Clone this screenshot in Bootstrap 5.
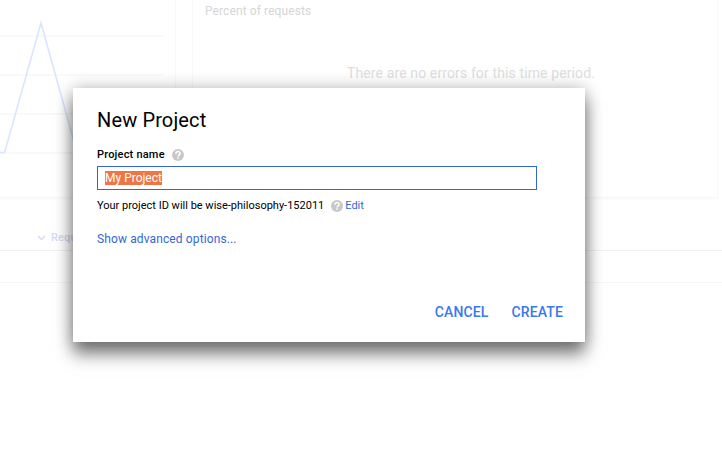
<!DOCTYPE html>
<html lang="en">
<head>
<meta charset="utf-8">
<meta name="viewport" content="width=device-width, initial-scale=1">
<title>New Project</title>
<link href="https://cdn.jsdelivr.net/npm/bootstrap@5.3.0/dist/css/bootstrap.min.css" rel="stylesheet">
<style>
body { font-family: Roboto, "Liberation Sans", sans-serif; background: #fff; width: 722px; height: 452px; overflow: hidden; color: #000; }
.panels { height: 198px; gap: 16px; }
.chart-panel { width: 176px; border: solid #f8f8f8; border-width: 0 1px 1px 0; box-shadow: 0 1px 1px #fafafa; }
.error-panel { width: 526px; border: solid #f8f8f8; border-width: 0 1px 1px 1px; box-shadow: 0 1px 1px #fafafa; padding: 3px 12px; }
.panel-label { font-size: 12px; line-height: 16px; color: #d6d6d6; letter-spacing: .1px; }
.empty-note { font-size: 14px; line-height: 20px; color: #dedede; margin-top: 44px; padding-left: 32px; letter-spacing: .12px; }
.requests-head { height: 53px; border-bottom: 1px solid #f1f1f1; padding: 28px 0 0 37px; gap: 5px; }
.requests-head span { font-size: 11px; line-height: 22px; font-weight: 500; color: #d3daf3; letter-spacing: .15px; }
.requests-row { height: 32px; border-bottom: 1px solid #f6f6f6; }
.dialog { left: 73px; top: 88px; width: 512px; height: 254px; padding: 18px 22px 18px 24px; background: #fff;
  box-shadow: 0 12px 16px rgba(0,0,0,.5), 0 0 16px rgba(0,0,0,.24); }
.dialog-title { font-size: 20px; line-height: 28px; font-weight: 400; letter-spacing: .13px; }
.name-label { font-size: 11px; line-height: 16px; font-weight: 500; margin-top: 13px; gap: 7px; letter-spacing: .2px; }
.name-field { width: 440px; height: 24px; margin-top: 3px; padding: 0 7px; border: 1px solid #3367d6; font-size: 12px; }
.selected-text { background: #ef7544; color: #fff; line-height: 14px; }
.id-note { font-size: 11px; line-height: 16px; margin-top: 8px; }
.id-note svg { margin-left: 7px; margin-right: 2px; }
.dialog a { color: #3367d6; }
.advanced { font-size: 12px; line-height: 16px; margin-top: 17px; letter-spacing: .12px; }
.actions { gap: 23px; }
.actions .btn { font-size: 14px; line-height: 24px; font-weight: 500; color: #3b78e7; letter-spacing: .12px; }
</style>
</head>
<body>
<svg class="d-none">
  <symbol id="help" viewBox="0 0 12 12"><circle cx="6" cy="6" r="6" fill="#c8c8c8"/><path d="M3.9 4.7C3.9 1.7 8.2 1.8 8.1 4.5C8.1 5.8 6.1 5.9 6.1 7.4" fill="none" stroke="#fff" stroke-width="1.5"/><path d="M5.3 8.3h1.5v1.5H5.3z" fill="#fff"/></symbol>
</svg>
<main>
  <div class="panels d-flex">
    <section class="chart-panel flex-shrink-0">
      <svg class="d-block" width="165" height="160" viewBox="0 0 165 160">
        <path d="M0 36h163M0 75h163M0 114h163M0 153h163" stroke="#f7f7f7" stroke-width="1.5"/>
        <path d="M0 152.5H4.6L41 23L77 152.5" fill="none" stroke="#d9e6fd" stroke-width="1.6"/>
      </svg>
    </section>
    <section class="error-panel flex-shrink-0">
      <div class="panel-label">Percent of requests</div>
      <div class="empty-note text-center">There are no errors for this time period.</div>
    </section>
  </div>
  <div class="requests-head d-flex align-items-center">
    <svg width="9" height="6" viewBox="0 0 9 6"><path d="M1 1L4.5 4.5L8 1" fill="none" stroke="#d3daf3" stroke-width="1.4"/></svg>
    <span>Requests</span>
  </div>
  <div class="requests-row"></div>
</main>
<div class="dialog position-absolute d-flex flex-column" role="dialog" aria-labelledby="dialog-title">
  <h1 class="dialog-title m-0" id="dialog-title">New Project</h1>
  <div class="name-label d-flex align-items-center">Project name <svg width="12" height="12"><use href="#help"/></svg></div>
  <div class="name-field d-flex align-items-center" role="textbox"><span class="selected-text">My Project</span></div>
  <div class="id-note d-flex align-items-center">Your project ID will be wise-philosophy-152011<svg width="12" height="12"><use href="#help"/></svg><a href="#" class="text-decoration-none">Edit</a></div>
  <div class="advanced"><a href="#" class="text-decoration-none">Show advanced options...</a></div>
  <div class="actions d-flex justify-content-end mt-auto">
    <button class="btn border-0 p-0" type="button">CANCEL</button>
    <button class="btn border-0 p-0" type="button">CREATE</button>
  </div>
</div>
<script src="https://cdn.jsdelivr.net/npm/bootstrap@5.3.0/dist/js/bootstrap.bundle.min.js"></script>
</body>
</html>
